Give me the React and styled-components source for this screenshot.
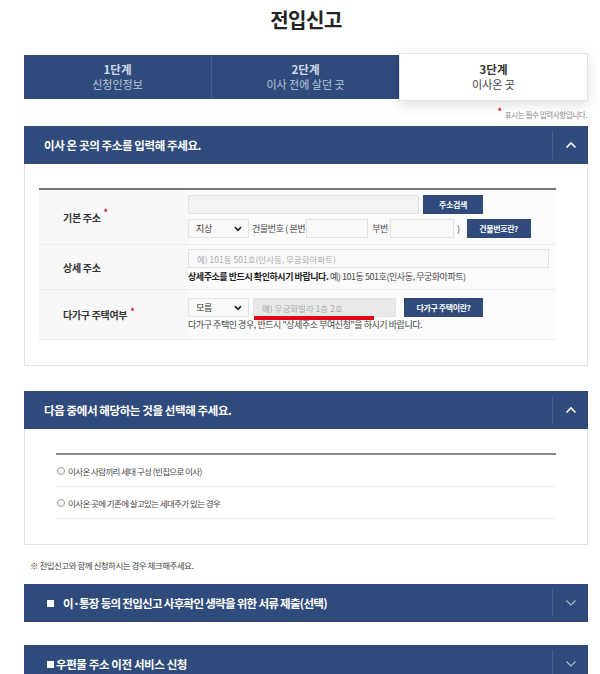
import React from "react";
import styled, { createGlobalStyle } from "styled-components";

const NAVY = "#2f4b7c";
const FONT = `"Noto Sans CJK KR", "Liberation Sans", sans-serif`;

const Global = createGlobalStyle`
  html, body { margin: 0; padding: 0; background: #fff; }
  body { font-family: ${FONT}; color: #333; }
  * { box-sizing: border-box; }
`;

const Page = styled.div`
  width: 600px;
  padding: 0 12px 0 24px;
`;

const Title = styled.h1`
  margin: 0;
  padding-top: 6px;
  height: 55px;
  text-align: center;
  font-size: 20px;
  line-height: 28px;
  font-weight: 700;
  color: #222;
  letter-spacing: -0.5px;
`;

const Steps = styled.div`
  display: flex;
  align-items: center;
  height: 44px;
  background: ${NAVY};
`;

const Step = styled.div`
  flex: 1;
  height: ${(p) => (p.$active ? "48px" : "44px")};
  display: flex;
  flex-direction: column;
  align-items: center;
  justify-content: center;
  background: ${(p) => (p.$active ? "#fff" : NAVY)};
  border-left: ${(p) => (p.$divider ? "1px solid #44608f" : "none")};
  border: ${(p) => (p.$active ? "1px solid #e2e2e2" : undefined)};
  box-shadow: ${(p) => (p.$active ? "0 4px 12px rgba(0,0,0,0.12)" : "none")};
  line-height: 15px;
`;

const StepNum = styled.span`
  font-size: 11.5px;
  font-weight: 700;
  color: ${(p) => (p.$active ? "#333" : "#d3dbea")};
`;

const StepName = styled.span`
  font-size: 11px;
  color: ${(p) => (p.$active ? "#444" : "#bcc7dc")};
`;

const Required = styled.div`
  height: 27px;
  display: flex;
  justify-content: flex-end;
  align-items: center;
  padding-right: 1px;
  padding-top: 4px;
  font-size: 7.5px;
  color: #888;
  letter-spacing: -0.4px;
`;

const Star = styled.span`
  color: #d0112b;
  font-size: 9px;
  font-weight: 700;
  margin-right: 3px;
  position: relative;
  top: -3px;
`;

const Panel = styled.section`
  margin-bottom: ${(p) => p.$mb || 0}px;
`;

const PanelHead = styled.div`
  height: 38px;
  display: flex;
  align-items: center;
  background: ${NAVY};
  color: #fff;
`;

const HeadTitle = styled.div`
  flex: 1;
  padding-left: ${(p) => p.$pl || 20}px;
  font-size: 11.5px;
  font-weight: 700;
  letter-spacing: ${(p) => p.$ls || -0.4}px;
  display: flex;
  align-items: center;
`;

const Square = styled.span`
  display: inline-block;
  width: 7px;
  height: 7px;
  background: #fff;
  margin-right: ${(p) => p.$gap}px;
`;

const Toggle = styled.div`
  width: 36px;
  height: 28px;
  display: flex;
  align-items: center;
  justify-content: center;
  border-left: 1px solid rgba(255, 255, 255, 0.12);
`;

const PanelBody = styled.div`
  border: 1px solid #e2e2e2;
  border-top: none;
  padding: ${(p) => p.$pad};
`;

const Table = styled.div`
  border-top: 2px solid #777;
`;

const Row = styled.div`
  display: flex;
  height: ${(p) => p.$h}px;
  border-bottom: 1px solid #eeeeee;
  background: #fbfbfb;
`;

const Label = styled.div`
  width: 149px;
  padding-left: 24px;
  display: flex;
  align-items: center;
  font-size: 10px;
  font-weight: 700;
  color: #333;
  letter-spacing: -0.3px;
  background: #f8f8f8;
`;

const LabelStar = styled.span`
  color: #d0112b;
  font-size: 9px;
  align-self: flex-start;
  margin-top: ${(p) => p.$top}px;
  margin-left: 3px;
`;

const Cell = styled.div`
  flex: 1;
  padding-top: ${(p) => p.$pt}px;
  display: flex;
  flex-direction: column;
  gap: ${(p) => p.$gap}px;
`;

const Line = styled.div`
  display: flex;
  align-items: center;
  gap: ${(p) => p.$gap || 0}px;
  font-size: 9px;
  color: #444;
  letter-spacing: -0.4px;
  white-space: nowrap;
`;

const Text = styled.span`
  margin: ${(p) => p.$m};
`;

const Field = styled.input`
  width: ${(p) => p.$w}px;
  height: 19px;
  border: 1px solid #e2e2e2;
  background: ${(p) => p.$bg || "#fafafa"};
  padding: 0 8px;
  font-family: ${FONT};
  font-size: 8.5px;
  color: #333;
  outline: none;
  &::placeholder { color: #aaa; }
`;

const FakeSelect = styled.div`
  width: 61px;
  height: 19px;
  border: 1px solid #e4e4e4;
  background: #fafafa;
  padding: 0 6px 0 7px;
  display: flex;
  align-items: center;
  justify-content: space-between;
  font-size: 9px;
  color: #333;
`;

const Btn = styled.button`
  width: ${(p) => p.$w}px;
  height: 19px;
  border: none;
  background: ${NAVY};
  color: #fff;
  font-family: ${FONT};
  font-size: 8px;
  font-weight: 700;
  letter-spacing: -0.4px;
  padding: 0;
  margin-left: ${(p) => p.$ml || 0}px;
`;

const Hint = styled.div`
  font-size: 9px;
  color: #444;
  letter-spacing: -0.45px;
  white-space: nowrap;
  b { color: #222; }
`;

const Mark = styled.div`
  position: relative;
`;

const RedBar = styled.span`
  position: absolute;
  left: 1px;
  top: 18px;
  width: 120px;
  height: 4px;
  background: #e30613;
`;

const Choices = styled.div`
  border-top: 2px solid #8a8a8a;
`;

const Choice = styled.label`
  height: 32px;
  display: flex;
  align-items: center;
  border-bottom: 1px solid #eeeeee;
  font-size: 8.5px;
  color: #444;
  letter-spacing: -0.6px;
`;

const Radio = styled.span`
  width: 8px;
  height: 8px;
  border: 1px solid #999;
  border-radius: 50%;
  margin: 0 3px 0 1px;
  background: #fff;
`;

const Note = styled.div`
  height: 39px;
  padding: 14px 0 0 6px;
  font-size: 8.5px;
  color: #444;
  letter-spacing: -0.5px;
`;

const Chevron = ({ up }) => (
  <svg width="12" height="8" viewBox="0 0 12 8">
    <path
      d={up ? "M1.5 6.5 L6 2 L10.5 6.5" : "M1.5 1.5 L6 6 L10.5 1.5"}
      fill="none"
      stroke={up ? "#fff" : "#aebbd3"}
      strokeWidth={up ? 1.6 : 1.1}
    />
  </svg>
);

const SelectArrow = () => (
  <svg width="8" height="6" viewBox="0 0 8 6">
    <path d="M1 1.2 L4 4.3 L7 1.2" fill="none" stroke="#222" strokeWidth="1.7" />
  </svg>
);

function Select({ value }) {
  return (
    <FakeSelect>
      <span>{value}</span>
      <SelectArrow />
    </FakeSelect>
  );
}

export default function App() {
  return (
    <Page>
      <Global />
      <Title>전입신고</Title>

      <Steps>
        <Step>
          <StepNum>1단계</StepNum>
          <StepName>신청인정보</StepName>
        </Step>
        <Step $divider>
          <StepNum>2단계</StepNum>
          <StepName>이사 전에 살던 곳</StepName>
        </Step>
        <Step $active>
          <StepNum $active>3단계</StepNum>
          <StepName $active>이사온 곳</StepName>
        </Step>
      </Steps>

      <Required>
        <Star>*</Star>표시는 필수 입력사항입니다.
      </Required>

      <Panel $mb={25}>
        <PanelHead>
          <HeadTitle>이사 온 곳의 주소를 입력해 주세요.</HeadTitle>
          <Toggle>
            <Chevron up />
          </Toggle>
        </PanelHead>
        <PanelBody $pad="24px 31px 25px 14px">
          <Table>
            <Row $h={55}>
              <Label>
                기본 주소<LabelStar $top={16}>*</LabelStar>
              </Label>
              <Cell $pt={5} $gap={5}>
                <Line $gap={4}>
                  <Field $w={231} $bg="#f3f3f3" />
                  <Btn $w={60}>주소검색</Btn>
                </Line>
                <Line>
                  <Select value="지상" />
                  <Text $m="0 1px 0 3px">건물번호 ( 본번</Text>
                  <Field $w={62} />
                  <Text $m="0 2px 0 4px">부번</Text>
                  <Field $w={64} />
                  <Text $m="0 0 0 3px">)</Text>
                  <Btn $w={64} $ml={7}>건물번호란?</Btn>
                </Line>
              </Cell>
            </Row>
            <Row $h={45}>
              <Label>상세 주소</Label>
              <Cell $pt={4} $gap={2}>
                <Field $w={361} placeholder="예) 101동 501호(인사동, 무궁화아파트)" />
                <Hint>
                  <b>상세주소를 반드시 확인하시기 바랍니다.</b> 예) 101동 501호(인사동, 무궁화아파트)
                </Hint>
              </Cell>
            </Row>
            <Row $h={50}>
              <Label>
                다가구 주택여부<LabelStar $top={15}>*</LabelStar>
              </Label>
              <Cell $pt={8} $gap={1}>
                <Line $gap={4}>
                  <Select value="모름" />
                  <Mark>
                    <Field $w={143} $bg="#e9e9e9" placeholder="예) 무궁화빌라 1층 2호" />
                    <RedBar />
                  </Mark>
                  <Btn $w={79} $ml={4}>다가구 주택이란?</Btn>
                </Line>
                <Hint>다가구 주택인 경우, 반드시 "상세주소 부여신청"을 하시기 바랍니다.</Hint>
              </Cell>
            </Row>
          </Table>
        </PanelBody>
      </Panel>

      <Panel>
        <PanelHead>
          <HeadTitle>다음 중에서 해당하는 것을 선택해 주세요.</HeadTitle>
          <Toggle>
            <Chevron up />
          </Toggle>
        </PanelHead>
        <PanelBody $pad="24px 31px 25px 31px">
          <Choices>
            <Choice>
              <Radio />
              이사온 사람끼리 세대 구성 (빈집으로 이사)
            </Choice>
            <Choice>
              <Radio />
              이사온 곳에 기존에 살고있는 세대주가 있는 경우
            </Choice>
          </Choices>
        </PanelBody>
      </Panel>

      <Note>※ 전입신고와 함께 신청하시는 경우 체크해주세요.</Note>

      <Panel $mb={23}>
        <PanelHead>
          <HeadTitle $pl={23} $ls={-0.7}>
            <Square $gap={9} />
            이·통장 등의 전입신고 사후확인 생략을 위한 서류 제출(선택)
          </HeadTitle>
          <Toggle>
            <Chevron />
          </Toggle>
        </PanelHead>
      </Panel>

      <Panel>
        <PanelHead>
          <HeadTitle $pl={23}>
            <Square $gap={2} />
            우편물 주소 이전 서비스 신청
          </HeadTitle>
          <Toggle>
            <Chevron />
          </Toggle>
        </PanelHead>
      </Panel>
    </Page>
  );
}
